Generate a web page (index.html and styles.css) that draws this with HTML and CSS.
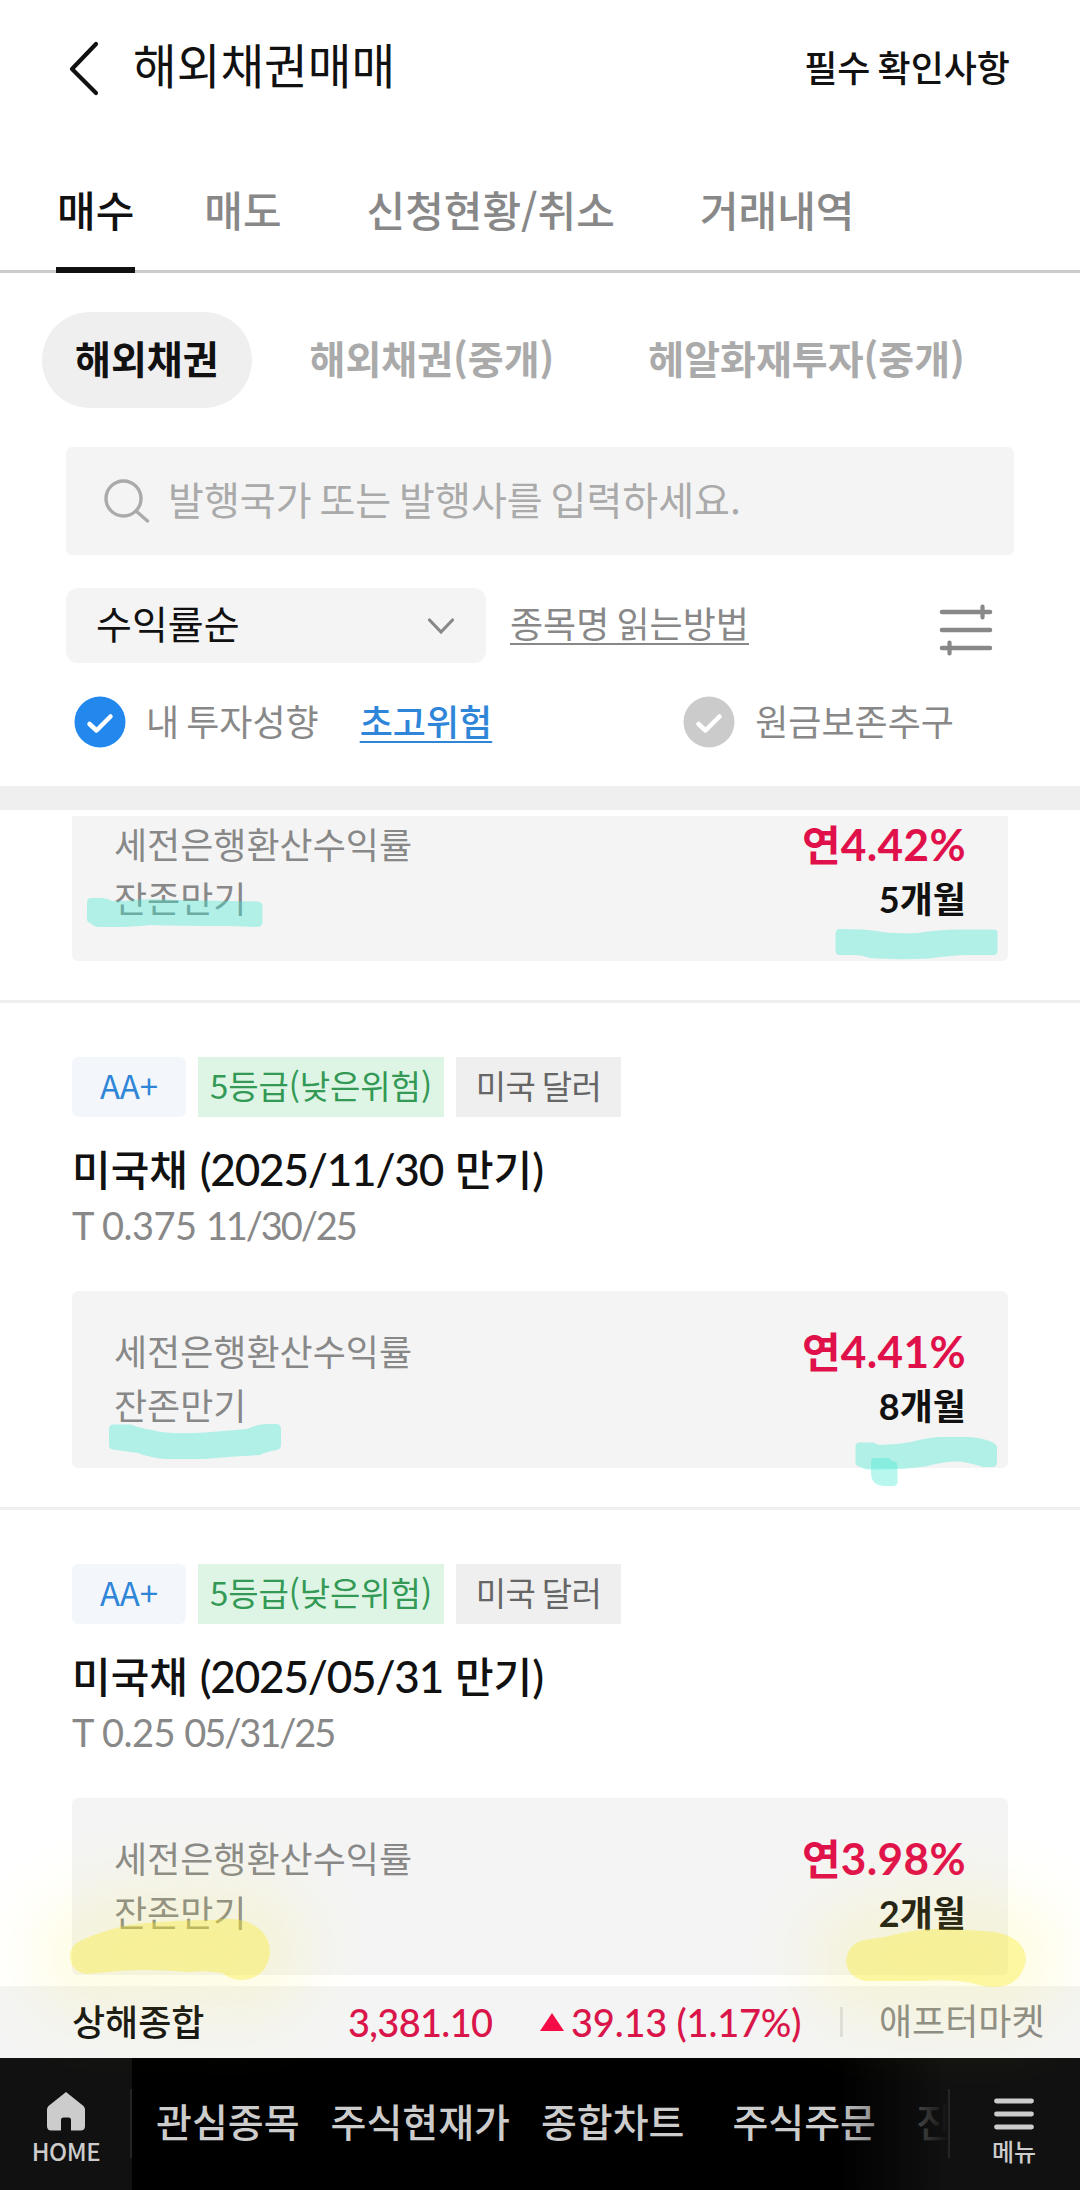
FILE: index.html
```html
<!DOCTYPE html>
<html lang="ko">
  <head>
    <meta charset="UTF-8" />
    <meta name="viewport" content="width=device-width, initial-scale=1.0" />
    <title>해외채권매매</title>
    <link rel="stylesheet" href="styles.css">
  </head>

  <body>
    <div class="app">
      <header class="header">
        <svg class="back" width="36" height="60" viewBox="0 0 36 60" fill="none" stroke="#111" stroke-width="4.2" stroke-linecap="round" stroke-linejoin="round">
          <path d="M30 6 L6 31 L30 55" />
        </svg>
        <h1>해외채권매매</h1>
        <a class="notice">필수 확인사항</a>
      </header>

      <nav class="tabs">
        <a class="tab active">매수</a>
        <a class="tab">매도</a>
        <a class="tab">신청현황/취소</a>
        <a class="tab">거래내역</a>
      </nav>

      <div class="pills">
        <a class="pill active">해외채권</a>
        <a class="pill">해외채권(중개)</a>
        <a class="pill">헤알화재투자(중개)</a>
      </div>

      <div class="search">
        <svg width="46" height="44" viewBox="0 0 46 44" fill="none" stroke="#aaa" stroke-width="3.4" stroke-linecap="round">
          <circle cx="19.5" cy="19.5" r="17.5" />
          <path d="M32 32 L43.5 42" />
        </svg>
        <span>발행국가 또는 발행사를 입력하세요.</span>
      </div>

      <div class="tools">
        <div class="select">
          <span>수익률순</span>
          <svg width="28" height="18" viewBox="0 0 28 18" fill="none" stroke="#888" stroke-width="3.2" stroke-linecap="round">
            <path d="M2.5 3 L14 15 L25.5 3" />
          </svg>
        </div>
        <a class="howto">종목명 읽는방법</a>
        <svg class="filter" width="54" height="54" viewBox="0 0 54 54" fill="none" stroke="#888" stroke-width="4.6" stroke-linecap="round">
          <path d="M3 9 H51 M3 27 H51 M3 45 H51" />
          <path d="M43.5 3.500 V14.500 M10.500 39.500 V50.500" stroke-width="4.2" />
        </svg>
      </div>

      <div class="checks">
        <svg class="check" width="52" height="52" viewBox="0 0 52 52">
          <circle cx="26" cy="26" r="25.5" fill="#2388ee" />
          <path d="M15.5 28 L22.5 34.5 L36.5 20.5" fill="none" stroke="#fff" stroke-width="4.5" stroke-linecap="round" stroke-linejoin="round" />
        </svg>
        <span class="label">내 투자성향</span>
        <a class="risk">초고위험</a>
        <svg class="check second" width="52" height="52" viewBox="0 0 52 52">
          <circle cx="26" cy="26" r="25.5" fill="#cbcbcb" />
          <path d="M15.5 28 L22.5 34.5 L36.5 20.5" fill="none" stroke="#fff" stroke-width="4.5" stroke-linecap="round" stroke-linejoin="round" />
        </svg>
        <span class="label">원금보존추구</span>
      </div>

      <main class="list">
        <section class="item first">
          <div class="card">
            <div class="row"><span>세전은행환산수익률</span><b class="rate">연<i>4.42%</i></b></div>
            <div class="row"><span>잔존만기</span><b class="left"><i>5</i>개월</b></div>
          </div>
        </section>

        <section class="item">
          <div class="tags">
            <span class="tag grade">AA+</span>
            <span class="tag low">5등급(낮은위험)</span>
            <span class="tag">미국 달러</span>
          </div>
          <h2>미국채 <i>(2025/11/30</i> 만기<i>)</i></h2>
          <p class="code">T 0.375 <span>11/30/25</span></p>
          <div class="card">
            <div class="row"><span>세전은행환산수익률</span><b class="rate">연<i>4.41%</i></b></div>
            <div class="row"><span>잔존만기</span><b class="left"><i>8</i>개월</b></div>
          </div>
        </section>

        <section class="item">
          <div class="tags">
            <span class="tag grade">AA+</span>
            <span class="tag low">5등급(낮은위험)</span>
            <span class="tag">미국 달러</span>
          </div>
          <h2>미국채 <i>(2025/05/31</i> 만기<i>)</i></h2>
          <p class="code">T 0.25 <span>05/31/25</span></p>
          <div class="card">
            <div class="row"><span>세전은행환산수익률</span><b class="rate">연<i>3.98%</i></b></div>
            <div class="row"><span>잔존만기</span><b class="left"><i>2</i>개월</b></div>
          </div>
        </section>
      </main>

      <div class="ticker">
        <span class="name">상해종합</span>
        <span class="price">3,381.10</span>
        <svg class="up" width="24" height="18" viewBox="0 0 24 18"><path d="M12 0 L24 18 H0 Z" fill="#f30c45" /></svg>
        <span class="diff">39.13 (1.17%)</span>
        <span class="bar"></span>
        <span class="market">애프터마켓</span>
      </div>

      <footer class="bottom">
        <a class="home">
          <svg width="38" height="39" viewBox="0 0 38 39" fill="#ccc">
            <path d="M19 0 L36.5 14 Q38 15.5 38 17.5 V34 Q38 38.5 33.5 38.5 H24 V28 Q24 25.5 21.5 25.5 H16.5 Q14 25.5 14 28 V38.5 H4.5 Q0 38.5 0 34 V17.5 Q0 15.5 1.5 14 Z" />
          </svg>
          <span>HOME</span>
        </a>
        <div class="quick">
          <a>관심종목</a>
          <a>주식현재가</a>
          <a>종합차트</a>
          <a>주식주문</a>
          <a>진</a>
        </div>
        <a class="menu">
          <svg width="40" height="32" viewBox="0 0 40 32" stroke="#ccc" stroke-width="4.8" stroke-linecap="round">
            <path d="M2.5 3 H37.5 M2.5 16 H37.5 M2.5 29 H37.5" />
          </svg>
          <span>메뉴</span>
        </a>
      </footer>

      <!-- 형광펜 표시 -->
      <svg class="marker" width="1080" height="2190" viewBox="0 0 1080 2190">
        <defs>
          <filter id="glow" x="-100%" y="-200%" width="300%" height="500%">
            <feGaussianBlur stdDeviation="34" />
          </filter>
          <path id="y1" d="M82 1940 Q102 1931 128 1925 Q170 1920 215 1920 Q228 1917 245 1921 Q270 1930 270 1953 Q267 1979 240 1980 Q230 1979 222 1973 Q205 1970 190 1972 Q140 1968 108 1972 L88 1974 Q71 1973 70 1956 Q70 1945 82 1940 Z" />
          <path id="y2" d="M865 1940 L885 1937 Q912 1930 930 1929 Q960 1929 995 1932 Q1026 1938 1026 1961 Q1020 1988 992 1987 Q980 1986 972 1983 Q950 1979 920 1981 L865 1981 Q847 1977 846 1961 Q848 1943 865 1940 Z" />
        </defs>
        <g fill="#3fe9d1" fill-opacity="0.37">
          <path d="M91 898 H102 Q107 898 112 901 H122 Q150 898 175 900 L258 901.5 Q262.5 902 262.5 906 V922 Q262.5 927 257 927 L230 926 Q180 926 150 925 Q130 927 118 927 H98 Q93 926 90 923 Q87 922 87 919 V903 Q87 898 91 898 Z" />
          <path d="M840 929 Q865 929 877 931 Q890 934 918 933 Q940 929 965 929.5 H993 Q997.5 929 997.5 933 V951 Q997.5 955 993 955 H965 Q945 956 930 958.5 Q895 960 870 958 Q862 955 855 955 H840 Q835.5 955 835.5 950 V934 Q835.5 929 840 929 Z" />
          <path d="M113 1424.5 H131 Q140 1428 152 1430 Q170 1435 205 1432.5 L247 1429 Q255 1425 266 1424 H277 Q281 1425 281 1429 V1445 Q281 1449 277 1450 Q265 1452 260 1455 Q235 1456 205 1459 H164 Q148 1457 138 1453 Q125 1451 113 1449.5 Q109 1449 109 1445 V1429 Q109 1425 113 1424.5 Z" />
          <path d="M860 1442.5 H873 L879 1445 Q895 1445 911 1442 Q925 1438 938 1437 H970 Q997 1440 997 1448 V1462 Q997 1467 992 1467 H983 Q965 1461 955 1461.5 Q940 1462 928 1466 Q905 1470 866 1469.5 L860 1467 Q855.5 1466 855.5 1462 V1447 Q855.5 1442.5 860 1442.5 Z" />
          <path d="M875 1458 H889 L892 1461 Q897.5 1461 897.5 1466 V1482 Q897.5 1486 893 1486 H884 Q871 1485 871 1473 V1463 Q871 1458 875 1458 Z" />
        </g>
        <g filter="url(#glow)" fill="#f9ee3c" stroke="#f9ee3c" stroke-width="76" stroke-linejoin="round" opacity="0.15">
          <use href="#y1" />
          <use href="#y2" />
        </g>
        <g fill="#faed30" fill-opacity="0.38">
          <use href="#y1" />
          <use href="#y2" />
        </g>
      </svg>
    </div>
  </body>
</html>
```
FILE: styles.css
```css
* {
  box-sizing: border-box;
}

body {
  margin: 0;
  background: #fff;
  color: #111;
  font-family: "Noto Sans CJK KR", sans-serif;
}

h1,
h2,
p {
  margin: 0;
  font-weight: 400;
}

svg {
  display: block;
  flex: none;
}

.app {
  position: relative;
  display: flex;
  flex-direction: column;
  width: 1080px;
  height: 2190px;
  overflow: hidden;
}

/* header */
.header {
  display: flex;
  align-items: center;
  height: 136px;
  padding: 0 70px 4px 66px;
}

.header h1 {
  margin: -4px 0 0 31px;
  font-size: 47.5px;
  line-height: 60px;
}

.back {
  margin-top: 4px;
}

.notice {
  margin-left: auto;
  font-size: 36px;
  font-weight: 500;
  word-spacing: -3px;
}

/* tabs */
.tabs {
  display: flex;
  height: 137px;
  padding-left: 56px;
  border-bottom: 3px solid #ccc;
}

.tab {
  height: 137px;
  margin-right: 68px;
  padding: 0 1px;
  font-size: 42px;
  font-weight: 500;
  line-height: 145px;
  color: #888;
}

.tab:nth-child(3) {
  margin: 0 83px 0 15px;
}

.tab.active {
  border-bottom: 6px solid #111;
  color: #111;
}

.pills {
  display: flex;
  height: 96px;
  margin: 39px 0 0 42px;
}

.pill {
  padding: 0 33px;
  border-radius: 48px;
  font-size: 39px;
  font-weight: 700;
  line-height: 90px;
  color: #aaa;
}

.pill + .pill {
  margin-left: 25px;
}

.pill:last-child {
  margin-left: 28px;
}

.pill.active {
  background: #efefef;
  color: #111;
}

.search {
  display: flex;
  align-items: center;
  height: 108px;
  margin: 39px 66px 0;
  padding: 0 38px;
  border-radius: 6px;
  background: #f4f4f4;
  color: #aaa;
  font-size: 39px;
}

.search span {
  margin: -6px 0 0 18px;
  word-spacing: -3px;
}

/* sort */
.tools {
  display: flex;
  height: 75px;
  margin: 33px 87px 0 66px;
}

.select {
  display: flex;
  align-items: center;
  justify-content: space-between;
  width: 420px;
  padding: 0 31px 0 30px;
  border-radius: 12px;
  background: #f4f4f4;
  font-size: 39px;
  line-height: 69px;
}

.select span {
  margin-top: -6px;
}

.howto {
  margin-left: 24px;
  color: #888;
  font-size: 36px;
  line-height: 69px;
  word-spacing: -3px;
  text-decoration: underline;
  text-decoration-thickness: 2px;
  text-underline-offset: 5px;
}

.filter {
  margin: 15px 0 0 auto;
}

.checks {
  display: flex;
  align-items: center;
  height: 123px;
  padding: 0 0 10px 74px;
  font-size: 36px;
  color: #888;
  white-space: nowrap;
  word-spacing: -3px;
}

.check {
  margin-top: 5px;
}

.check + span {
  margin-left: 20px;
}

.risk {
  margin-left: 41px;
  color: #2f86d8;
  font-weight: 500;
  text-decoration: underline;
  text-decoration-thickness: 2px;
  text-underline-offset: 5px;
}

.second {
  margin-left: 191px;
}

/* bond list */
.list {
  flex: none;
  height: 1200px;
  border-top: 24px solid #efefef;
  overflow: hidden;
}

.item {
  padding: 54px 72px 39px;
  border-bottom: 3px solid #efefef;
}

.item.first {
  height: 187px;
  margin-top: 6px;
  padding-top: 0;
  overflow: hidden;
}

.first .card {
  margin-top: -32px;
}

.tags {
  display: flex;
  gap: 12px;
}

.tag {
  width: 165px;
  height: 60px;
  background: #efefef;
  color: #666;
  font-size: 33px;
  line-height: 57px;
  letter-spacing: -0.6px;
  word-spacing: -2px;
  text-align: center;
}

.tag.grade {
  width: 114px;
  border-radius: 6px;
  background: #f3f7fb;
  color: #2f86d8;
  letter-spacing: 0;
}

.tag.low {
  width: 246px;
  background: #def5e5;
  color: #395;
  letter-spacing: -0.1px;
}

.item h2 {
  height: 63px;
  margin-top: 19px;
  font-size: 42px;
  font-weight: 500;
  line-height: 63px;
}

i {
  font-family: Lato, "Noto Sans CJK KR", sans-serif;
  font-size: 1.05em;
  font-style: normal;
}

h2 i {
  letter-spacing: -1.2px;
}

.code {
  height: 54px;
  color: #888;
  font-family: Lato, sans-serif;
  font-size: 38px;
  line-height: 52px;
  letter-spacing: -0.5px;
}

.code span {
  letter-spacing: -2.1px;
}

.card {
  height: 177px;
  margin-top: 38px;
  padding: 32px 42px;
  border-radius: 6px;
  background: #f4f4f4;
}

.row {
  display: flex;
  justify-content: space-between;
  height: 54px;
  line-height: 54px;
  font-size: 36px;
  color: #888;
}

.rate {
  color: #e0114a;
  font-size: 42px;
}

.rate i {
  letter-spacing: 0.4px;
}

.left {
  color: #111;
}

.left i {
  font-size: 1em;
}

/* index ticker */
.ticker {
  display: flex;
  align-items: center;
  flex: none;
  height: 72px;
  padding-left: 72px;
  background: #f4f4f4;
  font-size: 36px;
  font-weight: 500;
  line-height: 66px;
  white-space: nowrap;
}

.name {
  width: 276px;
  margin-top: -4px;
}

.price,
.diff {
  color: #d9154a;
  font-family: Lato, sans-serif;
  font-size: 38px;
}

.price {
  width: 192px;
  letter-spacing: -0.7px;
}

.diff {
  width: 269px;
  margin-left: 7px;
  letter-spacing: -0.2px;
}

.bar {
  width: 3px;
  height: 30px;
  margin-right: 36px;
  background: #ddd;
}

.market {
  margin-top: -7px;
  color: #888;
  font-weight: 400;
}

/* bottom bar */
.bottom {
  display: flex;
  flex: none;
  height: 132px;
  background: #000;
  color: #ccc;
  font-weight: 500;
}

.home,
.menu {
  position: relative;
  display: flex;
  flex-direction: column;
  align-items: center;
  width: 132px;
  padding-top: 34px;
  background: #111;
  font-size: 24px;
  line-height: 36px;
}

.home span {
  margin-top: 2px;
  letter-spacing: -0.4px;
}

.quick {
  position: relative;
  display: flex;
  width: 816px;
  padding-left: 24px;
  overflow: hidden;
  font-size: 39px;
  line-height: 124px;
  white-space: nowrap;
}

.quick a {
  flex: none;
  margin-right: 31px;
}

.quick a:nth-child(3) {
  margin-right: 48px;
}

.quick a:nth-child(4) {
  margin-right: 40px;
}

/* fade under the menu button */
.quick::after {
  content: "";
  position: absolute;
  top: 0;
  right: 0;
  width: 112px;
  height: 132px;
  background: linear-gradient(to right, rgba(17, 17, 17, 0), #111);
}

.menu {
  padding: 40px 0 0;
}

.menu span {
  margin-top: 3px;
}

.home::after,
.menu::before {
  content: "";
  position: absolute;
  top: 31px;
  right: 0;
  width: 2px;
  height: 69px;
  background: #252525;
}

.menu::before {
  right: auto;
  left: 0;
}

.marker {
  position: absolute;
  top: 0;
  left: 0;
  pointer-events: none;
}
```
